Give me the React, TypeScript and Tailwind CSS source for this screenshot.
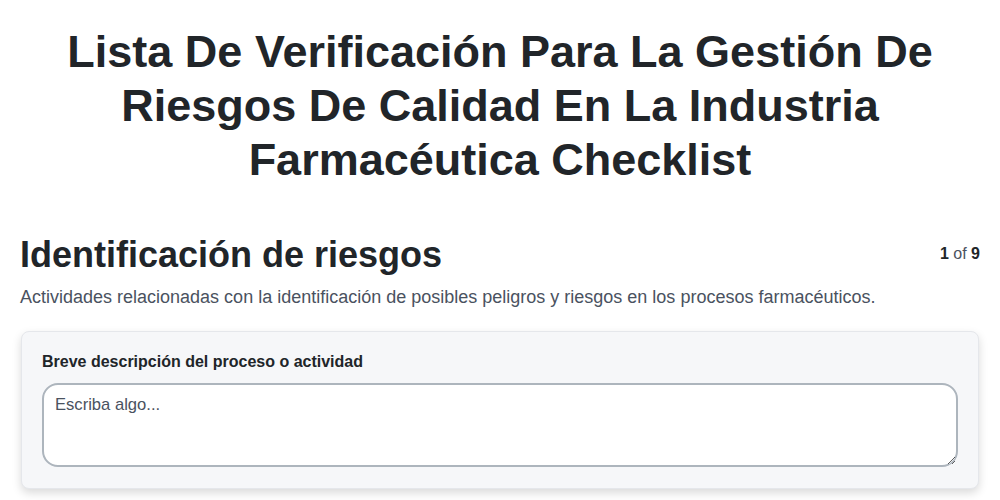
import React from "react";

export default function App() {
  return (
    <div className="min-h-[500px] bg-white text-[#212529]" style={{ fontFamily: '"Liberation Sans", Arial, sans-serif' }}>
      <div className="px-5 pt-[25px]">
        <h1 className="text-center text-[45px] font-bold leading-[54px] px-[40px]">
          Lista De Verificación Para La Gestión De Riesgos De Calidad En La Industria Farmacéutica Checklist
        </h1>
        <div className="mt-[46px] flex items-start justify-between">
          <h2 className="text-[36px] font-bold leading-[44px]">Identificación de riesgos</h2>
          <div className="mt-[11px] text-[16px] leading-[20px] text-[#212529]">
            <span className="font-bold">1</span> <span className="text-[#4a5260]">of</span> <span className="font-bold">9</span>
          </div>
        </div>
        <p className="mt-[8px] text-[18px] leading-[24px] text-[#4a5260]">
          Actividades relacionadas con la identificación de posibles peligros y riesgos en los procesos farmacéuticos.
        </p>
        <div className="mt-[22px] mx-px rounded-[8px] border border-[#e5e7eb] bg-[#f6f7f9] px-[20px] pt-[21px] pb-[21px] shadow-[0_4px_10px_rgba(0,0,0,0.15)]">
          <label className="block text-[16px] font-bold leading-[18px] text-[#212529]">
            Breve descripción del proceso o actividad
          </label>
          <textarea
            className="mt-[12px] block h-[84px] w-full resize-y rounded-[16px] border-2 border-[#adb5bd] bg-white px-[11px] py-[10px] text-[16.6px] leading-[20px] text-[#212529] placeholder:text-[#4a5260] outline-none"
            placeholder="Escriba algo..."
          />
        </div>
      </div>
    </div>
  );
}
